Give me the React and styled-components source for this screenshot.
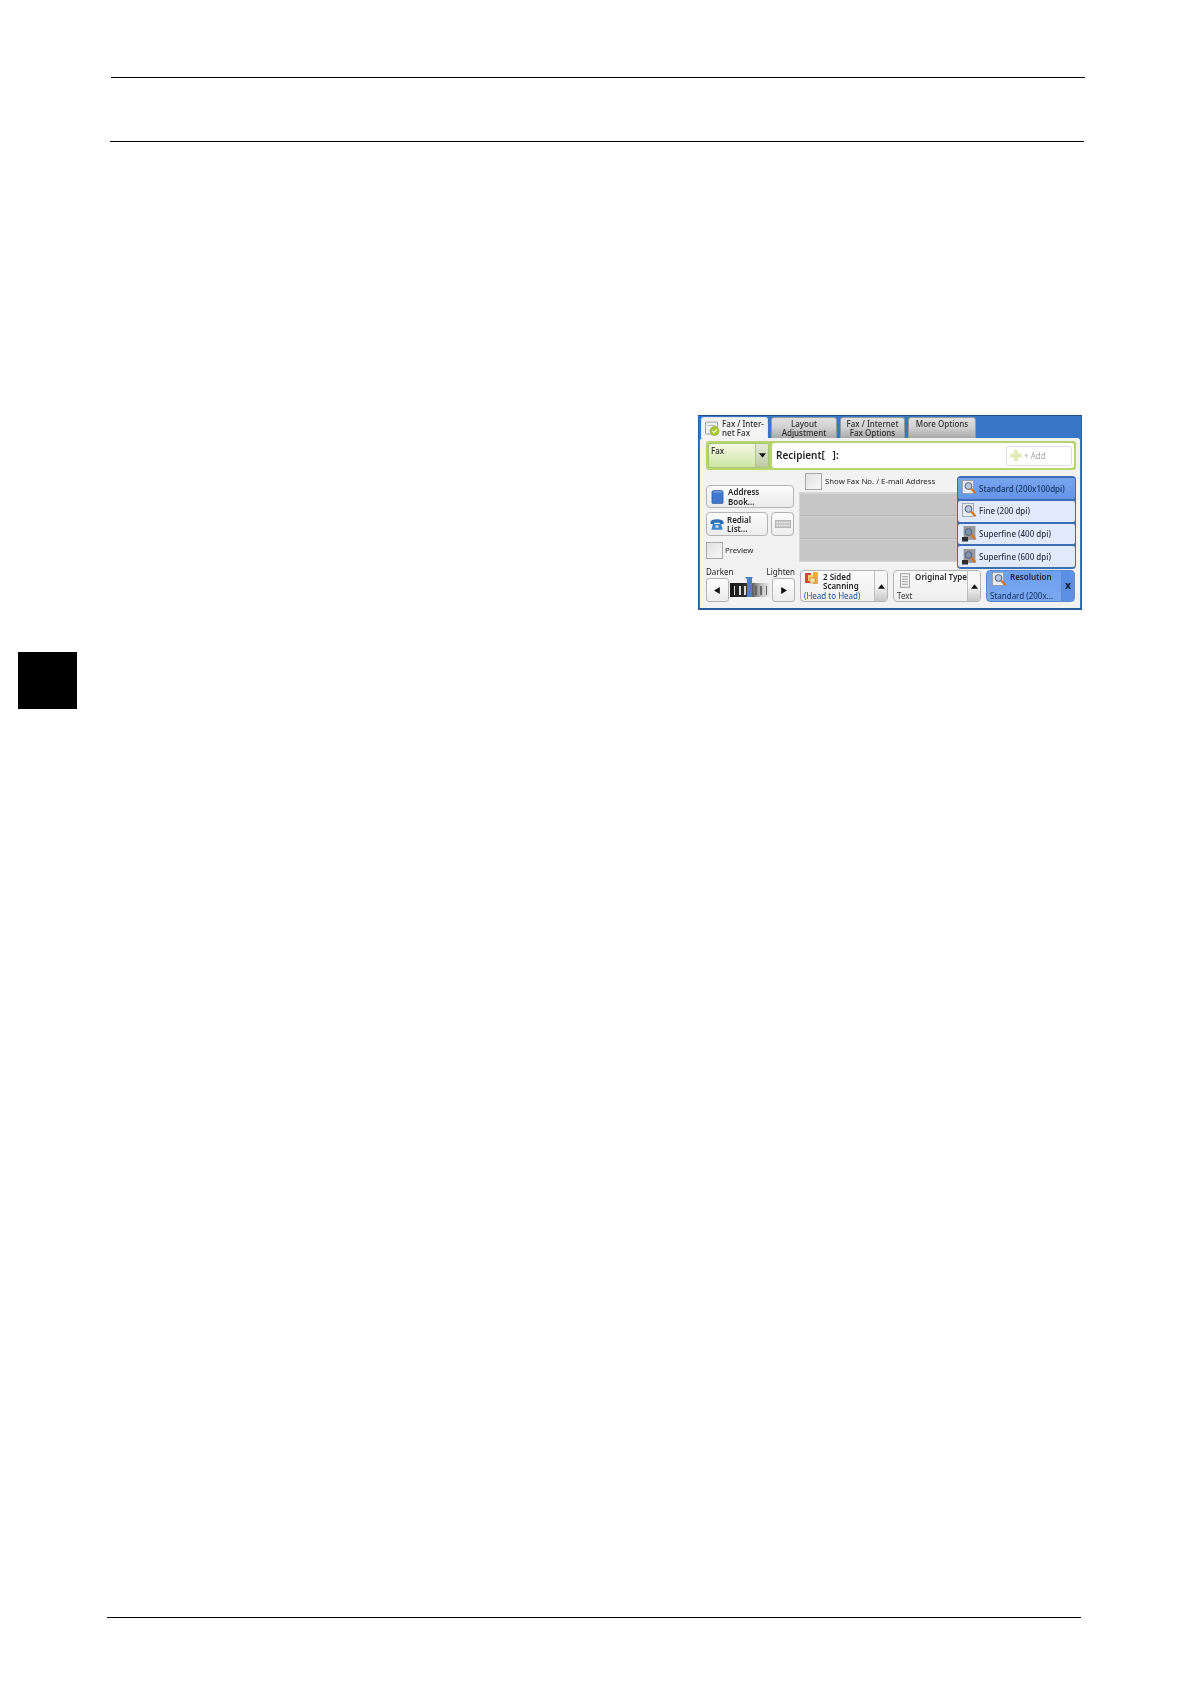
import React from 'react'
import { styled, createGlobalStyle } from 'styled-components'

const Global = createGlobalStyle`
  html, body { margin: 0; background: #fff; }
  body { font-family: "Noto Sans", "Liberation Sans", sans-serif; }
`

const Page = styled.div`
  width: 1190px;
  height: 1684px;
  padding-top: 77px;
  box-sizing: border-box;
  overflow: hidden;
`
const Rule = styled.div`
  height: 1px;
  width: 974px;
  background: #000;
  margin-left: ${p => p.$left}px;
  margin-top: ${p => p.$top || 0}px;
`
const SideTab = styled.div`
  width: 59px;
  height: 57px;
  margin: 43px 0 0 18px;
  background: #000;
`

const Frame = styled.div`
  width: 384px;
  height: 195px;
  margin: 273px 0 -1px 698px;
  box-sizing: border-box;
  display: flex;
  flex-direction: column;
  background: #3a76c6;
  border: 1px solid #2a5f9f;
  border-bottom-width: 2px;
  border-top-color: #234f8c;
  color: #262626;
  font-size: 8px;
  line-height: 9.4px;
  filter: blur(0.4px);
`
const TabBar = styled.div`
  height: 21px;
  padding: 1px 0 0 2px;
  display: flex;
  gap: 3px;
  flex-shrink: 0;
`
const Tab = styled.div`
  width: ${p => p.$w}px;
  box-sizing: border-box;
  display: flex;
  align-items: center;
  justify-content: center;
  gap: 2px;
  text-align: center;
  font-weight: 500;
  border-radius: 3px 3px 0 0;
  border: 1px solid ${p => (p.$active ? '#dfe6ee' : '#8f9aa6')};
  border-bottom: none;
  background: ${p => (p.$active ? '#f3f3f3' : 'linear-gradient(#e0e0e0, #d2d2d2 45%, #a9a9a9)')};
  color: #2e2e2e;
`
const TabText = styled.span`
  text-align: ${p => (p.$left ? 'left' : 'center')};
  margin-bottom: ${p => p.$lift || 0}px;
`
const Panel = styled.div`
  flex: 1;
  position: relative;
  margin: 0 1px 0 1px;
  padding: 3px 5px 0 6px;
  background: #f2f2f2;
  border-radius: 3px 3px 0 0;
`
const GreenBar = styled.div`
  width: 370px;
  height: 29px;
  box-sizing: border-box;
  padding: 2px;
  display: flex;
  gap: 3px;
  background: #b6d56e;
  border-radius: 3px;
`
const FaxSelect = styled.div`
  width: 59px;
  display: flex;
  border: 1px solid #a9c574;
  border-radius: 3px;
  background: linear-gradient(#f4f7e4, #cfe6a4);
  overflow: hidden;
`
const FaxLabel = styled.div`
  flex: 1;
  padding: 2px 0 0 2px;
  font-weight: 500;
`
const FaxArrow = styled.div`
  width: 12px;
  display: flex;
  align-items: center;
  justify-content: center;
  border-left: 1px solid #b5c892;
  background: linear-gradient(#e6e9da, #bccaa4);
`
const RecipientBox = styled.div`
  flex: 1;
  display: flex;
  align-items: center;
  justify-content: space-between;
  padding: 0 2px 0 4px;
  background: #fff;
  border-radius: 3px;
  font-size: 10px;
  font-weight: 600;
  color: #222;
  white-space: pre;
`
const AddButton = styled.div`
  width: 66px;
  height: 20px;
  box-sizing: border-box;
  display: flex;
  align-items: center;
  gap: 2px;
  padding-left: 3px;
  border: 1px solid #dedede;
  border-radius: 3px;
  font-size: 8px;
  font-weight: 400;
  color: #a8a8a8;
`

const TopRow = styled.div`
  display: flex;
  height: 97px;
`
const LeftCol = styled.div`
  width: 89px;
  flex-shrink: 0;
  padding-top: 15px;
  display: flex;
  flex-direction: column;
`
const CenterCol = styled.div`
  margin-left: 4px;
  width: 276px;
  padding-top: 3px;
`
const Btn = styled.div`
  box-sizing: border-box;
  display: flex;
  align-items: center;
  gap: ${p => p.$gap || 3}px;
  padding-left: ${p => p.$pad || 3}px;
  width: ${p => p.$w}px;
  height: ${p => p.$h}px;
  border: 1px solid #b4b4b4;
  border-radius: 4px;
  background: linear-gradient(#fbfbfb, #ececec);
  font-weight: 600;
`
const BtnRow = styled.div`
  display: flex;
  gap: 3px;
  margin-top: 4px;
`
const CheckBox = styled.div`
  width: 17px;
  height: 17px;
  box-sizing: border-box;
  border: 1px solid #a9a9a9;
  background: linear-gradient(135deg, #e2e2e2, #f7f7f7);
  flex-shrink: 0;
`
const CheckRow = styled.div`
  display: flex;
  align-items: center;
  gap: ${p => p.$gap}px;
  margin: ${p => p.$m};
  font-size: 7.8px;
`
const GreyArea = styled.div`
  margin-top: 2px;
  border: 1px solid #d4d4d4;
  background: #c6c6c6;
`
const GreyRow = styled.div`
  height: 21px;
  border-bottom: 1px solid #b4b4b4;
  border-top: 1px solid #d4d4d4;
  &:last-child { border-bottom: none; }
`

const Popup = styled.div`
  position: absolute;
  left: 257px;
  top: 38px;
  width: 119px;
  height: 93px;
  box-sizing: border-box;
  display: flex;
  flex-direction: column;
  gap: 2px;
  padding: 2px 1px;
  background: #3d6db4;
  border-radius: 4px;
`
const PopupRow = styled.div`
  flex: 1;
  display: flex;
  align-items: center;
  gap: 2px;
  padding-left: 4px;
  font-weight: 500;
  border-radius: 2px;
  background: ${p => (p.$on ? 'linear-gradient(#79a5ee, #6394e6)' : '#e0eafb')};
  color: ${p => (p.$on ? '#14305f' : '#2b3442')};
  white-space: nowrap;
`

const BottomRow = styled.div`
  display: flex;
`
const Stepper = styled.div`
  width: 89px;
  flex-shrink: 0;
`
const StepLabels = styled.div`
  display: flex;
  justify-content: space-between;
  height: 11px;
  line-height: 10px;
`
const StepControls = styled.div`
  display: flex;
  align-items: center;
  justify-content: space-between;
`
const StepBtn = styled.div`
  width: ${p => p.$w}px;
  height: 24px;
  box-sizing: border-box;
  display: flex;
  align-items: center;
  justify-content: center;
  border: 1px solid #b4b4b4;
  border-radius: 3px;
  background: linear-gradient(#fcfcfc, #ececec);
`
const Density = styled.div`
  position: relative;
  width: 41px;
  height: 14px;
  display: flex;
  align-items: center;
  justify-content: space-around;
  padding: 0 2px;
  box-sizing: border-box;
  background: linear-gradient(90deg, #151515 0%, #333 45%, #bcbcbc 75%, #f4f4f4 100%);
`
const DensityTick = styled.span`
  width: 1.5px;
  height: 9px;
  background: ${p => (p.$light ? '#666' : '#d8d8d8')};
`
const DensityMark = styled.div`
  position: absolute;
  left: 17px;
  top: -6px;
  width: 5px;
  height: 20px;
  background: #4b7fc9;
  &::before {
    content: "";
    position: absolute;
    left: -2px;
    top: 0;
    border: 4.5px solid transparent;
    border-top: 5px solid #4b7fc9;
    border-bottom: none;
  }
`
const Tiles = styled.div`
  margin: 3px 0 0 5px;
  display: flex;
  gap: 5px;
`
const Tile = styled.div`
  width: ${p => p.$w}px;
  height: 32px;
  box-sizing: border-box;
  display: flex;
  border: 1px solid ${p => (p.$on ? '#5e8bd0' : '#b4b4b4')};
  border-radius: 4px;
  overflow: hidden;
  background: ${p => (p.$on ? 'linear-gradient(#6f9ff0, #7aa7ee)' : 'linear-gradient(#fbfbfb, #eeeeee)')};
`
const TileMain = styled.div`
  flex: 1;
  min-width: 0;
  padding: 1px 0 1px 3px;
  display: flex;
  flex-direction: column;
  justify-content: space-between;
  white-space: nowrap;
`
const TileHead = styled.div`
  display: flex;
  gap: ${p => p.$gap}px;
  padding-left: ${p => p.$pad}px;
  font-weight: 600;
`
const TileValue = styled.div`
  color: ${p => p.$color || '#333'};
`
const TileSide = styled.div`
  width: 12px;
  flex-shrink: 0;
  display: flex;
  align-items: center;
  justify-content: center;
  border-left: 1px solid ${p => (p.$on ? '#5e8bd0' : '#bdbdbd')};
  background: ${p => (p.$on ? '#5c90e4' : 'linear-gradient(#f6f6f6 50%, #c6c6c6)')};
  font-size: 10px;
  font-weight: 800;
  color: #12233f;
`

const Arrow = ({ dir, size = 7, color = '#111' }) => {
  const pts = {
    up: '0,5 3,1 6,5',
    down: '0,1 6,1 3,5',
    left: '5,0 5,6 0,3',
    right: '1,0 1,6 6,3',
  }
  return (
    <svg width={size} height={size} viewBox="0 0 6 6">
      <polygon points={pts[dir]} fill={color} />
    </svg>
  )
}

const TabIcon = () => (
  <svg width="15" height="16" viewBox="0 0 15 16">
    <rect x="0.5" y="2" width="12" height="12" rx="1" fill="#eef0f2" stroke="#9aa0a6" />
    <rect x="2.5" y="5" width="8" height="1" fill="#bbb" />
    <circle cx="9.5" cy="11" r="4.5" fill="#a8c92e" stroke="#7b9c18" strokeWidth="0.5" />
    <path d="M7.4 11l1.6 1.7 3-3.4" fill="none" stroke="#f4f8d8" strokeWidth="1.2" />
  </svg>
)
const PlusIcon = () => (
  <svg width="12" height="13" viewBox="0 0 13 14">
    <path d="M4.5 1h4v4h4v4h-4v4h-4v-4h-4v-4h4z" fill="#dfeab4" stroke="#eaf2cd" strokeWidth="0.6" />
  </svg>
)
const BookIcon = () => (
  <svg width="13" height="16" viewBox="0 0 14 16">
    <path d="M1 3q0-2 2-2h8q2 0 2 2v11q0 1-1 1H2q-1 0-1-1z" fill="#3f78cc" stroke="#28589f" strokeWidth="0.7" />
    <rect x="2" y="2" width="10" height="1.2" fill="#84aae4" />
  </svg>
)
const PhoneIcon = () => (
  <svg width="14" height="13" viewBox="0 0 15 13">
    <path d="M0.5 4Q1 1 7.5 1t7 3v2h-4V4.5h-6V6h-4z" fill="#2f6fb8" />
    <path d="M3 6h9l1.5 6h-12z" fill="#3f86cf" />
    <rect x="6" y="7.5" width="3" height="2.5" fill="#d7e7f7" />
  </svg>
)
const KeyboardIcon = () => (
  <svg width="16" height="8" viewBox="0 0 16 8">
    <rect width="16" height="8" fill="#c8c8c8" stroke="#a6a6a6" />
    <path d="M1.5 2.5h13M1.5 5.5h13" stroke="#f0f0f0" strokeDasharray="1.4 1" />
  </svg>
)
const LensIcon = ({ dark }) => (
  <svg width="15" height="16" viewBox="0 0 15 16">
    <rect x={dark ? 2 : 0.5} y="0.5" width="11" height="13" fill={dark ? '#9a9a9a' : '#e8edf2'} stroke="#8a8f96" strokeWidth="0.7" />
    <circle cx="6.5" cy="6" r="3.4" fill={dark ? '#7f8fb0' : '#b8c6e2'} stroke="#55617a" />
    <path d="M9 8.5l4.6 4.8" stroke="#d0761c" strokeWidth="2.2" />
    {dark && <rect x="0" y="11" width="6" height="4.5" fill="#2e2e2e" />}
  </svg>
)
const DuplexIcon = () => (
  <svg width="14" height="13" viewBox="0 0 14 13">
    <rect x="0" y="1" width="6" height="10" fill="#d8443a" />
    <rect x="3" y="3" width="7" height="6" fill="#f3cf6a" />
    <rect x="8" y="0" width="5" height="12" fill="#e8b23e" />
    <rect x="5" y="6" width="5" height="5" fill="#f6e3a0" stroke="#b06a3a" strokeWidth="0.5" />
  </svg>
)
const DocIcon = () => (
  <svg width="12" height="17" viewBox="0 0 12 17">
    <rect x="0.5" y="0.5" width="11" height="16" fill="#f4f4f4" stroke="#8d8d8d" />
    <path d="M2.5 4h7M2.5 7h7M2.5 10h7M2.5 13h7" stroke="#8d8d8d" />
  </svg>
)

const resolutions = [
  { label: 'Standard (200x100dpi)', on: true },
  { label: 'Fine (200 dpi)' },
  { label: 'Superfine (400 dpi)', dark: true },
  { label: 'Superfine (600 dpi)', dark: true },
]

const FaxScreen = () => (
  <Frame>
    <TabBar>
      <Tab $w={67} $active>
        <TabIcon />
        <TabText $left>Fax / Inter-<br />net Fax</TabText>
      </Tab>
      <Tab $w={66}><TabText>Layout<br />Adjustment</TabText></Tab>
      <Tab $w={65}><TabText>Fax / Internet<br />Fax Options</TabText></Tab>
      <Tab $w={68}><TabText $lift={9}>More Options</TabText></Tab>
    </TabBar>
    <Panel>
      <GreenBar>
        <FaxSelect>
          <FaxLabel>Fax</FaxLabel>
          <FaxArrow><Arrow dir="down" /></FaxArrow>
        </FaxSelect>
        <RecipientBox>
          {'Recipient[   ]:'}
          <AddButton><PlusIcon />+ Add</AddButton>
        </RecipientBox>
      </GreenBar>
      <TopRow>
        <LeftCol>
          <Btn $w={88} $h={23} $pad={4} $gap={4}>
            <BookIcon />
            <span>Address<br />Book...</span>
          </Btn>
          <BtnRow>
            <Btn $w={62} $h={24}>
              <PhoneIcon />
              <span>Redial<br />List...</span>
            </Btn>
            <Btn $w={23} $h={24} $pad={3}><KeyboardIcon /></Btn>
          </BtnRow>
          <CheckRow $gap={2} $m="6px 0 0">
            <CheckBox />
            Preview
          </CheckRow>
        </LeftCol>
        <CenterCol>
          <CheckRow $gap={3} $m="0 0 0 6px">
            <CheckBox />
            Show Fax No. / E-mail Address
          </CheckRow>
          <GreyArea>
            <GreyRow /><GreyRow /><GreyRow />
          </GreyArea>
        </CenterCol>
      </TopRow>
      <Popup>
        {resolutions.map(r => (
          <PopupRow key={r.label} $on={r.on}>
            <LensIcon dark={r.dark} />
            {r.label}
          </PopupRow>
        ))}
      </Popup>
      <BottomRow>
        <Stepper>
          <StepLabels><span>Darken</span><span>Lighten</span></StepLabels>
          <StepControls>
            <StepBtn $w={23}><Arrow dir="left" /></StepBtn>
            <Density>
              <DensityTick /><DensityTick /><DensityTick /><DensityTick />
              <DensityTick $light /><DensityTick $light /><DensityTick $light />
              <DensityMark />
            </Density>
            <StepBtn $w={23}><Arrow dir="right" /></StepBtn>
          </StepControls>
        </Stepper>
        <Tiles>
          <Tile $w={88}>
            <TileMain>
              <TileHead $gap={4} $pad={1}>
                <DuplexIcon />
                <span>2 Sided<br />Scanning</span>
              </TileHead>
              <TileValue $color="#1d4f9e">(Head to Head)</TileValue>
            </TileMain>
            <TileSide><Arrow dir="up" /></TileSide>
          </Tile>
          <Tile $w={88}>
            <TileMain>
              <TileHead $gap={5} $pad={3}>
                <DocIcon />
                <span>Original Type</span>
              </TileHead>
              <TileValue>Text</TileValue>
            </TileMain>
            <TileSide><Arrow dir="up" /></TileSide>
          </Tile>
          <Tile $w={89} $on>
            <TileMain>
              <TileHead $gap={3} $pad={2}>
                <LensIcon />
                <span>Resolution</span>
              </TileHead>
              <TileValue $color="#123061">Standard (200x...</TileValue>
            </TileMain>
            <TileSide $on>x</TileSide>
          </Tile>
        </Tiles>
      </BottomRow>
    </Panel>
  </Frame>
)

export default function App() {
  return (
    <Page>
      <Global />
      <Rule $left={111} />
      <Rule $left={110} $top={63} />
      <FaxScreen />
      <SideTab />
      <Rule $left={107} $top={908} />
    </Page>
  )
}
